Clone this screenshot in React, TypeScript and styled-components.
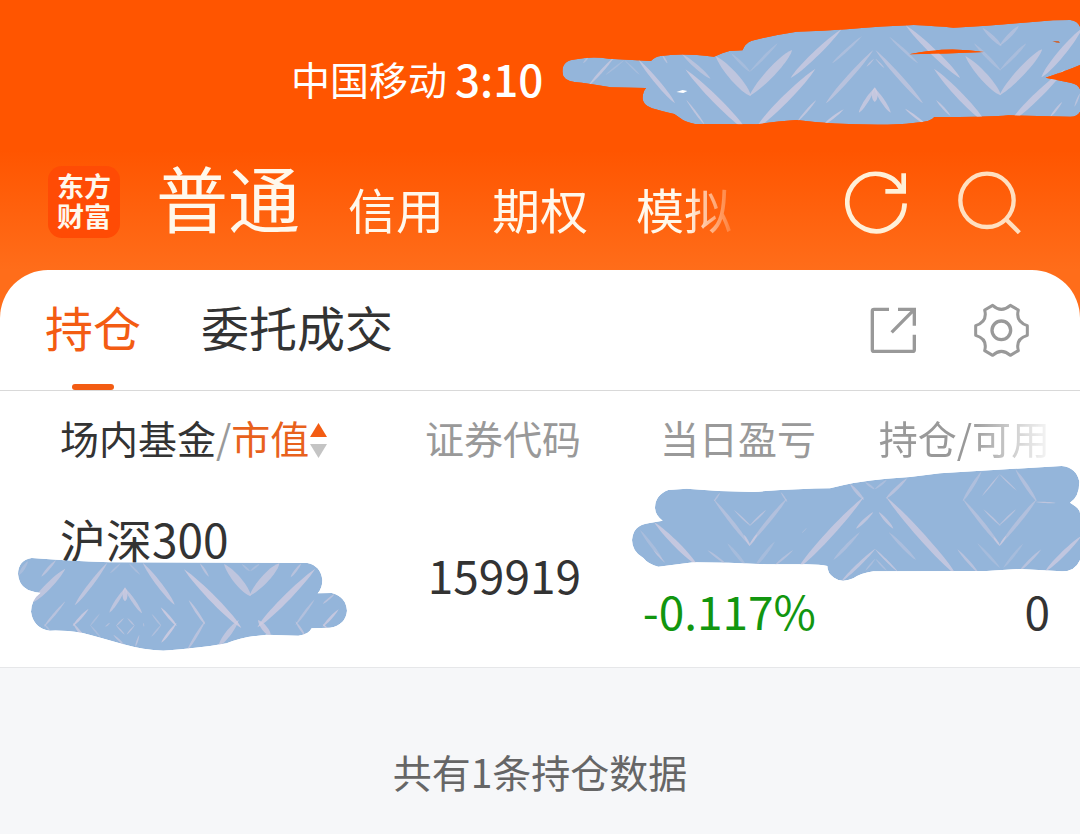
import React, { useId, useState } from "react";
import styled, { createGlobalStyle } from "styled-components";

const GlobalStyle = createGlobalStyle`
  * { box-sizing: border-box; }
  body {
    margin: 0;
    background: #f6f7f9;
    font-family: "Noto Sans CJK SC", sans-serif;
    color: #333;
  }
  button {
    border: 0;
    padding: 0;
    margin: 0;
    background: none;
    font-family: inherit;
    color: inherit;
    cursor: pointer;
  }
`;

const Page = styled.div`
  overflow: hidden;
  background: linear-gradient(#ff5500 150px, #ff6d1a 270px, #ff6d1a 340px, transparent 340px) no-repeat;
`;

const StatusBar = styled.div`
  position: relative;
  display: flex;
  align-items: center;
  gap: 8px;
  padding: 46px 0 0 291px;
  color: #fff;
  font-weight: 500;
  line-height: 64px;
  white-space: nowrap;
`;

const Carrier = styled.span`
  font-size: 39px;
  font-weight: 400;
`;

const Clock = styled.time`
  font-size: 44px;
`;

const Header = styled.header`
  display: flex;
  align-items: flex-end;
  padding: 44px 59px 32px 48px;
  color: #fff8ec;
`;

const Logo = styled.div`
  flex: none;
  width: 72px;
  height: 72px;
  padding: 5px 9px;
  border-radius: 14px;
  background: #ff4b05;
  font-size: 27px;
  font-weight: 700;
  line-height: 30px;
  text-align: center;
`;

const AccountNav = styled.nav`
  flex: none;
  display: flex;
  align-items: flex-end;
  gap: 48px;
  margin-left: 36px;
  padding-right: 10px;
  mask-image: linear-gradient(to left, transparent, #000 56px);
`;

const AccountButton = styled.button<{ $active: boolean }>`
  font-size: ${(p) => (p.$active ? 72 : 48)}px;
  line-height: ${(p) => (p.$active ? 84 : 60)}px;
  white-space: nowrap;
`;

const Actions = styled.div<{ $gap: number }>`
  display: flex;
  align-items: center;
  gap: ${(p) => p.$gap}px;
  margin-left: auto;
`;

const HeaderActions = styled(Actions)`
  padding-bottom: 4px;
`;

const IconButton = styled.button<{ $color: string }>`
  display: block;
  color: ${(p) => p.$color};
  svg {
    display: block;
    fill: none;
    stroke: currentColor;
  }
`;

const Card = styled.main`
  background: #fff;
  border-radius: 48px 48px 0 0;
  border-bottom: 1px solid #e6e7e9;
`;

const TabBar = styled.div`
  display: flex;
  align-items: center;
  padding: 0 51px 0 45px;
  border-bottom: 1px solid #d9d9d9;
`;

const Tabs = styled.div`
  display: flex;
  gap: 60px;
`;

const Tab = styled.button<{ $active: boolean }>`
  position: relative;
  padding-bottom: 8px;
  font-size: 48px;
  line-height: 112px;
  white-space: nowrap;
  color: ${(p) => (p.$active ? "#f35c13" : "#333")};
  &::after {
    content: "";
    display: ${(p) => (p.$active ? "block" : "none")};
    position: absolute;
    left: calc(50% - 21px);
    bottom: 0;
    width: 42px;
    height: 6px;
    border-radius: 3px;
    background: #f35c13;
  }
`;

const Holdings = styled.section`
  position: relative;
`;

const Table = styled.table`
  width: 100%;
  table-layout: fixed;
  border-collapse: collapse;
`;

const Column = styled.col<{ $width?: number }>`
  width: ${(p) => (p.$width ? `${p.$width}px` : "auto")};
`;

const HeadCell = styled.th`
  height: 96px;
  padding: 0 0 4px;
  font-size: 39px;
  font-weight: 400;
  line-height: 60px;
  text-align: right;
  white-space: nowrap;
  color: #999;
  &:first-child {
    padding-left: 60px;
    text-align: left;
  }
  &:last-child {
    padding-right: 30px;
  }
`;

const SortButton = styled.button`
  display: flex;
  align-items: center;
  font-size: 39px;
  line-height: 60px;
  color: #999;
  svg {
    margin: 6px 0 0 1px;
  }
`;

const Dark = styled.span`
  color: #333;
`;

const Accent = styled.span`
  color: #e8611c;
`;

const FadedLabel = styled.span`
  display: block;
  mask-image: linear-gradient(to left, rgba(0, 0, 0, 0.08), rgba(0, 0, 0, 0.5) 40px, #000 80px);
`;

const Cell = styled.td`
  padding: 15px 0 21px;
  font-size: 46px;
  line-height: 72px;
  text-align: right;
  white-space: nowrap;
  &:first-child {
    padding-left: 60px;
    text-align: left;
  }
  &:last-child {
    padding-right: 30px;
  }
`;

const Lines = styled.div<{ $tone?: string }>`
  display: grid;
  grid-template-rows: 72px 72px;
  color: ${(p) => p.$tone ?? "inherit"};
`;

const SecondLine = styled.span`
  grid-row: 2;
`;

const Summary = styled.p`
  margin: 0;
  padding: 73px 24px 32px;
  font-size: 39px;
  line-height: 60px;
  text-align: center;
  color: #666;
`;

const BrushSvg = styled.svg<{ $top: number; $side: "left" | "right" }>`
  position: absolute;
  top: ${(p) => p.$top}px;
  ${(p) => p.$side}: 0;
  pointer-events: none;
`;

/* x1, y1, x2, y2, thickness, opacity */
type Streak = [number, number, number, number, number, number];

const streakPath = ([x1, y1, x2, y2, w]: Streak) => {
  const len = Math.hypot(x2 - x1, y2 - y1);
  const nx = ((y2 - y1) / len) * w * 0.55;
  const ny = (-(x2 - x1) / len) * w * 0.55;
  const at = (t: number, side: number) =>
    `${x1 + (x2 - x1) * t + nx * side} ${y1 + (y2 - y1) * t + ny * side}`;
  return `M${x1} ${y1}C${at(0.25, 1)} ${at(0.85, 1)} ${x2} ${y2}C${at(0.85, -1)} ${at(0.25, -1)} ${x1} ${y1}Z`;
};

interface BrushProps {
  width: number;
  height: number;
  viewBox: string;
  top: number;
  side: "left" | "right";
  outline: string;
  streaks: Streak[];
  children?: React.ReactNode;
}

function Brush({ width, height, viewBox, top, side, outline, streaks, children }: BrushProps) {
  const id = useId();
  return (
    <BrushSvg
      width={width}
      height={height}
      viewBox={viewBox}
      preserveAspectRatio="none"
      $top={top}
      $side={side}
      aria-hidden="true"
    >
      <clipPath id={id}>
        <path d={outline} clipRule="evenodd" />
      </clipPath>
      <g clipPath={`url(#${id})`}>
        <path d={outline} fill="#94b5da" fillRule="evenodd" />
        {streaks.map((s, i) => (
          <path key={i} d={streakPath(s)} fill="#d0cce0" opacity={s[5]} />
        ))}
        {children}
      </g>
    </BrushSvg>
  );
}

const statusOutline =
  "M65 215C65 190 80 180 105 178Q150 168 200 176L322 183Q335 170 350 168Q410 158 505 170Q530 158 550 153L588 151Q595 130 615 122Q680 105 745 95Q820 93 890 88Q1000 78 1085 75Q1150 78 1200 83Q1300 78 1385 70Q1440 65 1490 61L1540 60Q1560 62 1568 80V195Q1530 212 1468 233L1540 248Q1562 252 1568 268V335Q1560 350 1540 350L1360 346Q1300 352 1145 351Q1135 366 1090 368Q1040 374 980 374Q850 374 745 360Q680 365 630 373L450 372Q425 366 415 360L390 342Q350 333 325 325Q298 315 298 295Q298 275 308 264L205 262Q140 250 100 246Q65 240 65 215ZM1072 163Q1180 138 1290 156Q1180 162 1072 163Z";

const statusStreaks: Streak[] = [
  [215, 172, 142, 256, 10, 0.7],
  [125, 190, 140, 172, 6, 0.5],
  [245, 180, 190, 225, 6, 0.3],
  [245, 180, 290, 225, 6, 0.3],
  [285, 178, 392, 310, 16, 0.75],
  [355, 165, 370, 190, 6, 0.6],
  [412, 162, 495, 236, 14, 0.6],
  [422, 208, 600, 392, 24, 0.8],
  [425, 300, 478, 374, 7, 0.7],
  [510, 168, 612, 288, 30, 0.7],
  [608, 288, 732, 150, 30, 0.7],
  [555, 160, 610, 216, 10, 0.3],
  [608, 216, 690, 130, 10, 0.3],
  [875, 88, 728, 234, 20, 0.75],
  [800, 206, 628, 384, 26, 0.8],
  [802, 300, 748, 364, 8, 0.7],
  [935, 108, 848, 190, 10, 0.4],
  [968, 150, 830, 310, 16, 0.6],
  [974, 150, 1112, 310, 16, 0.6],
  [970, 176, 948, 200, 5, 0.6],
  [974, 176, 1000, 204, 5, 0.6],
  [972, 264, 926, 338, 14, 0.75],
  [970, 264, 1018, 338, 14, 0.75],
  [972, 262, 972, 306, 20, 0.8],
  [882, 328, 824, 374, 9, 0.8],
  [1060, 326, 1120, 374, 9, 0.8],
  [1014, 110, 1098, 190, 10, 0.4],
  [1062, 76, 1220, 234, 22, 0.75],
  [1144, 206, 1292, 366, 24, 0.75],
  [1150, 300, 1192, 348, 8, 0.7],
  [1235, 168, 1338, 286, 28, 0.7],
  [1334, 286, 1458, 148, 28, 0.7],
  [1260, 130, 1338, 212, 12, 0.35],
  [1334, 212, 1412, 130, 12, 0.35],
  [1285, 84, 1340, 138, 14, 0.45],
  [1334, 138, 1390, 78, 14, 0.45],
  [1575, 84, 1456, 232, 24, 0.75],
  [1524, 208, 1366, 366, 24, 0.75],
  [1516, 306, 1482, 350, 8, 0.7],
  [1568, 280, 1552, 320, 6, 0.6],
];

const profitOutline =
  "M105 322Q106 285 145 270L200 266Q300 275 400 276Q530 266 630 265Q700 245 800 236Q880 232 960 220L1225 204L1325 198Q1370 203 1378 245Q1378 290 1350 308Q1380 325 1380 340V480Q1365 515 1325 514L1200 507L1100 513L760 514Q720 520 700 535Q665 550 642 533Q622 520 622 498Q600 493 560 493H440Q330 487 220 487L115 500Q85 493 70 474Q36 455 36 420Q40 375 85 370L128 362Q105 345 105 322Z";

const profitStreaks: Streak[] = [
  [102, 366, 232, 496, 20, 0.8],
  [60, 390, 128, 480, 12, 0.35],
  [100, 450, 135, 488, 6, 0.5],
  [300, 278, 282, 304, 6, 0.5],
  [280, 296, 390, 436, 14, 0.5],
  [386, 436, 500, 296, 14, 0.5],
  [482, 276, 502, 306, 6, 0.5],
  [342, 330, 392, 378, 6, 0.6],
  [388, 378, 438, 330, 6, 0.6],
  [372, 404, 390, 438, 8, 0.7],
  [388, 438, 412, 402, 8, 0.7],
  [262, 450, 320, 494, 8, 0.5],
  [322, 430, 380, 500, 12, 0.3],
  [465, 424, 405, 500, 12, 0.3],
  [520, 450, 462, 498, 8, 0.5],
  [545, 400, 560, 384, 3, 0.4],
  [690, 252, 732, 300, 12, 0.6],
  [732, 290, 535, 504, 24, 0.75],
  [862, 234, 798, 296, 12, 0.6],
  [798, 290, 1008, 524, 24, 0.75],
  [735, 246, 764, 268, 8, 0.4],
  [764, 268, 800, 240, 8, 0.4],
  [760, 336, 708, 386, 11, 0.7],
  [776, 336, 820, 386, 11, 0.7],
  [720, 396, 640, 480, 12, 0.4],
  [806, 396, 888, 480, 12, 0.4],
  [766, 446, 664, 544, 12, 0.7],
  [764, 446, 834, 516, 7, 0.7],
  [766, 476, 736, 512, 6, 0.4],
  [766, 476, 800, 512, 6, 0.4],
  [1085, 214, 1028, 304, 12, 0.45],
  [1028, 296, 1140, 436, 14, 0.5],
  [1138, 436, 1250, 298, 14, 0.5],
  [1186, 208, 1250, 304, 14, 0.5],
  [1140, 222, 1086, 288, 5, 0.6],
  [1138, 222, 1190, 272, 5, 0.6],
  [1090, 328, 1142, 378, 6, 0.6],
  [1136, 378, 1188, 328, 6, 0.6],
  [1246, 306, 1308, 309, 4, 0.7],
  [1120, 410, 1140, 438, 7, 0.7],
  [1138, 438, 1158, 408, 7, 0.7],
  [1012, 448, 1076, 520, 10, 0.6],
  [1072, 430, 1140, 504, 10, 0.3],
  [1210, 430, 1150, 504, 10, 0.3],
  [1264, 448, 1198, 514, 10, 0.6],
  [1384, 408, 1276, 514, 16, 0.75],
];

const valueOutline =
  "M54 222Q55 180 95 174Q200 182 330 187L922 189Q962 197 967 240Q967 265 953 280L995 279Q1038 290 1041 332Q1037 375 990 383L935 385Q925 405 895 407Q840 405 800 404Q730 410 680 430Q600 445 490 452Q430 450 370 433Q300 412 245 398Q190 390 150 392Q100 385 93 335Q93 300 122 278Q58 275 54 222Z";

const valueStreaks: Streak[] = [
  [84, 184, 56, 226, 12, 0.35],
  [168, 180, 124, 230, 10, 0.6],
  [196, 206, 96, 308, 22, 0.7],
  [196, 304, 132, 380, 9, 0.6],
  [132, 372, 150, 392, 6, 0.4],
  [322, 188, 224, 316, 15, 0.7],
  [362, 190, 330, 220, 7, 0.35],
  [386, 190, 420, 224, 7, 0.35],
  [428, 188, 524, 314, 18, 0.75],
  [376, 264, 328, 338, 13, 0.7],
  [374, 264, 426, 340, 13, 0.7],
  [375, 262, 375, 304, 18, 0.8],
  [266, 326, 218, 378, 10, 0.8],
  [218, 368, 262, 426, 10, 0.7],
  [482, 322, 530, 378, 10, 0.85],
  [530, 368, 484, 428, 10, 0.85],
  [372, 354, 348, 378, 5, 0.6],
  [348, 376, 374, 404, 5, 0.6],
  [382, 354, 404, 378, 5, 0.6],
  [404, 376, 380, 404, 5, 0.6],
  [330, 368, 316, 380, 5, 0.5],
  [300, 340, 270, 378, 6, 0.35],
  [270, 374, 302, 412, 6, 0.35],
  [455, 342, 484, 378, 6, 0.45],
  [484, 374, 454, 410, 6, 0.45],
  [430, 368, 432, 380, 4, 0.5],
  [340, 404, 372, 434, 7, 0.6],
  [418, 404, 406, 440, 6, 0.6],
  [566, 300, 616, 374, 10, 0.7],
  [616, 362, 562, 450, 10, 0.6],
  [552, 208, 724, 384, 24, 0.85],
  [716, 360, 656, 438, 20, 0.7],
  [600, 190, 626, 230, 8, 0.6],
  [672, 192, 752, 288, 28, 0.7],
  [748, 288, 838, 190, 28, 0.7],
  [725, 192, 750, 214, 7, 0.35],
  [750, 214, 778, 192, 7, 0.35],
  [946, 206, 772, 382, 24, 0.8],
  [774, 360, 812, 408, 20, 0.8],
  [904, 190, 872, 232, 9, 0.6],
  [944, 298, 886, 376, 9, 0.5],
  [886, 364, 916, 408, 8, 0.6],
  [1004, 282, 968, 312, 7, 0.6],
  [1016, 328, 968, 380, 10, 0.8],
  [968, 372, 986, 390, 6, 0.8],
];

const accounts = ["普通", "信用", "期权", "模拟"];
const tabs = ["持仓", "委托成交"];

export default function App() {
  const [account, setAccount] = useState(accounts[0]);
  const [tab, setTab] = useState(tabs[0]);

  return (
    <>
      <GlobalStyle />
      <Page>
        <StatusBar>
          <Carrier>中国移动</Carrier>
          <Clock>3:10</Clock>
          <Brush width={540} height={140} viewBox="0 0 1568 420" top={0} side="right" outline={statusOutline} streaks={statusStreaks}>
            <path d="M396 276L414 270L428 273L416 279Z" fill="#fff" />
            <path d="M1488 123L1506 123L1510 129L1500 128Z" fill="#c8693c" />
          </Brush>
        </StatusBar>

        <Header>
          <Logo>
            东方
            <br />
            财富
          </Logo>
          <AccountNav>
            {accounts.map((name) => (
              <AccountButton key={name} type="button" $active={name === account} onClick={() => setAccount(name)}>
                {name}
              </AccountButton>
            ))}
          </AccountNav>
          <HeaderActions $gap={50}>
            <IconButton type="button" aria-label="刷新" $color="#fff0d8">
              <svg width="63" height="63" viewBox="74 65 189 189" strokeWidth="14">
                <path d="M253 162A86 86 0 1 1 244 121" />
                <path d="M250 72V126H195" />
              </svg>
            </IconButton>
            <IconButton type="button" aria-label="搜索" $color="#ffdfc0">
              <svg width="63" height="63" viewBox="414 59 189 189" strokeWidth="13">
                <circle cx="501" cy="147" r="80" />
                <path d="M557 203L598 244" />
              </svg>
            </IconButton>
          </HeaderActions>
        </Header>

        <Card>
          <TabBar>
            <Tabs role="tablist">
              {tabs.map((name) => (
                <Tab key={name} type="button" role="tab" aria-selected={name === tab} $active={name === tab} onClick={() => setTab(name)}>
                  {name}
                </Tab>
              ))}
            </Tabs>
            <Actions $gap={57}>
              <IconButton type="button" aria-label="分享" $color="#999">
                <svg width="47" height="47" viewBox="152 470 141 141" strokeWidth="10">
                  <path d="M209 477H164Q159 477 159 482V598Q159 603 164 603H280Q285 603 285 598V553" />
                  <path d="M236 477H285V526M285 477L217 546" />
                </svg>
              </IconButton>
              <IconButton type="button" aria-label="设置" $color="#999">
                <svg width="55" height="55" viewBox="464 459 165 165" strokeWidth="9" strokeLinejoin="round">
                  <path d="M469 527C494 519 502 503 496 480L520 466Q546 490 573 466L597 480C591 503 599 519 624 527V556C599 563 591 579 597 602L573 616Q546 592 520 616L496 602C502 579 494 563 469 556Z" />
                  <circle cx="546" cy="541" r="28" strokeWidth="10" />
                </svg>
              </IconButton>
            </Actions>
          </TabBar>

          <Holdings>
            <Table>
              <colgroup>
                <Column />
                <Column $width={200} />
                <Column $width={235} />
                <Column $width={264} />
              </colgroup>
              <thead>
                <tr>
                  <HeadCell scope="col">
                    <SortButton type="button">
                      <Dark>场内基金</Dark>/<Accent>市值</Accent>
                      <svg width="17" height="35" viewBox="0 0 34 70" aria-hidden="true">
                        <path d="M17 0L34 28H0Z" fill="#f35c13" />
                        <path d="M0 42H34L17 70Z" fill="#c4c4c4" />
                      </svg>
                    </SortButton>
                  </HeadCell>
                  <HeadCell scope="col">证券代码</HeadCell>
                  <HeadCell scope="col">当日盈亏</HeadCell>
                  <HeadCell scope="col">
                    <FadedLabel>持仓/可用</FadedLabel>
                  </HeadCell>
                </tr>
              </thead>
              <tbody>
                <tr>
                  <Cell>
                    <Lines>
                      <span>沪深300</span>
                    </Lines>
                  </Cell>
                  <Cell>159919</Cell>
                  <Cell>
                    <Lines $tone="#12960f">
                      <SecondLine>-0.117%</SecondLine>
                    </Lines>
                  </Cell>
                  <Cell>
                    <Lines>
                      <SecondLine>0</SecondLine>
                    </Lines>
                  </Cell>
                </tr>
              </tbody>
            </Table>
            <Brush width={460} height={270} viewBox="0 0 1380 810" top={9} side="right" outline={profitOutline} streaks={profitStreaks} />
            <Brush width={380} height={170} viewBox="0 0 1140 510" top={109} side="left" outline={valueOutline} streaks={valueStreaks} />
          </Holdings>
        </Card>
        <Summary>共有1条持仓数据</Summary>
      </Page>
    </>
  );
}
